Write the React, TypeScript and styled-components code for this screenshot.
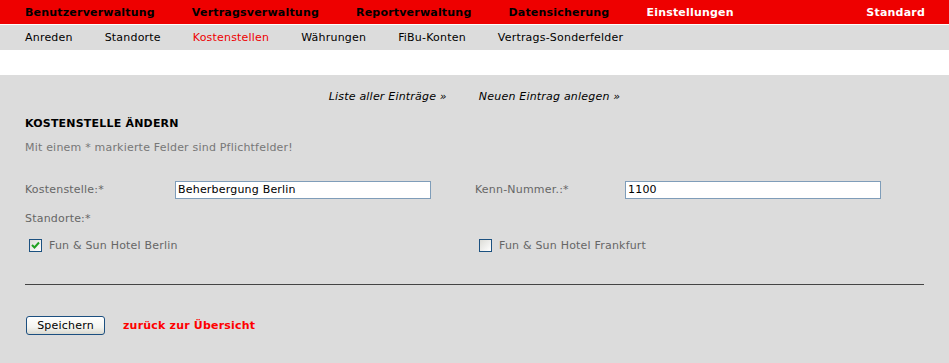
import styled, { createGlobalStyle } from "styled-components";

const GlobalStyle = createGlobalStyle`
  html, body {
    margin: 0;
    padding: 0;
    background: #dcdcdc;
    font-family: "DejaVu Sans", Verdana, sans-serif;
    font-size: 11px;
    letter-spacing: 0.2px;
  }
`;

const TopNav = styled.div`
  display: flex;
  align-items: center;
  height: 24px;
  padding: 0 24px 0 25px;
  background-color: #ee0000;
  border-bottom: 1px solid #ffffff;
  gap: 37px;
`;

const TopItem = styled.a<{ $active?: boolean; $right?: boolean }>`
  font-weight: bold;
  color: ${(p) => (p.$active || p.$right ? "#ffffff" : "#000000")};
  text-decoration: none;
  white-space: nowrap;
  margin-left: ${(p) => (p.$right ? "auto" : "0")};
`;

const SubNav = styled.div`
  display: flex;
  align-items: center;
  height: 25px;
  padding-left: 25px;
  gap: 32px;
  background-color: #dcdcdc;
`;

const SubItem = styled.a<{ $active?: boolean }>`
  color: ${(p) => (p.$active ? "#ee0000" : "#000000")};
  text-decoration: none;
  white-space: nowrap;
`;

const Spacer = styled.div`
  height: 25px;
  background: #ffffff;
`;

const Content = styled.div`
  background: #dcdcdc;
  padding: 15px 25px 0 25px;
  min-height: 273px;
  box-sizing: border-box;
`;

const LinkRow = styled.div`
  display: flex;
  justify-content: center;
  gap: 32px;
  line-height: 14px;
`;

const ItalicLink = styled.a`
  font-style: italic;
  color: #000000;
  text-decoration: none;
`;

const Heading = styled.h2`
  margin: 13px 0 0 0;
  font-size: 11px;
  line-height: 14px;
  font-weight: bold;
  color: #000000;
`;

const Hint = styled.p`
  margin: 10px 0 0 0;
  line-height: 14px;
  color: #777777;
`;

const FieldGrid = styled.div`
  display: grid;
  grid-template-columns: 450px 1fr;
  margin-top: 25px;
`;

const Field = styled.div`
  display: flex;
  align-items: center;
`;

const Label = styled.label`
  width: 150px;
  flex-shrink: 0;
  color: #666666;
  line-height: 18px;
  padding-top: 1px;
`;

const TextInput = styled.input`
  width: 256px;
  height: 18px;
  box-sizing: border-box;
  border: 1px solid #7f9db9;
  background: #ffffff;
  padding: 0 2px;
  font-family: "DejaVu Sans", Verdana, sans-serif;
  font-size: 11px;
  letter-spacing: 0.2px;
  color: #000000;
  outline: none;
`;

const SectionLabel = styled.div`
  margin-top: 13px;
  color: #666666;
  line-height: 14px;
`;

const CheckGrid = styled.div`
  display: grid;
  grid-template-columns: 450px 1fr;
  margin-top: 13px;
`;

const CheckItem = styled.label`
  display: flex;
  align-items: center;
  gap: 7px;
  padding-left: 4px;
  color: #666666;
  line-height: 14px;
`;

const Box = styled.span`
  display: inline-flex;
  align-items: center;
  justify-content: center;
  width: 13px;
  height: 13px;
  box-sizing: border-box;
  border: 1px solid #1c5180;
  background: linear-gradient(135deg, #dcdcd7 0%, #ffffff 100%);
  margin-top: -2px;
`;

const Divider = styled.hr`
  margin: 31px 0 0 0;
  border: 0;
  border-top: 1px solid #444444;
  height: 0;
`;

const Actions = styled.div`
  display: flex;
  align-items: center;
  gap: 18px;
  margin-top: 31px;
`;

const SaveButton = styled.button`
  width: 79px;
  height: 19px;
  margin-left: 1px;
  box-sizing: border-box;
  border: 1px solid #1c4f80;
  border-radius: 3px;
  background: linear-gradient(#ffffff 0%, #f4f4f0 60%, #d8d8d0 100%);
  font-family: "DejaVu Sans", Verdana, sans-serif;
  font-size: 11px;
  letter-spacing: 0.2px;
  color: #000000;
  padding: 0;
`;

const BackLink = styled.a`
  font-weight: bold;
  color: #ff0000;
  text-decoration: none;
`;

const Check = ({ checked }: { checked?: boolean }) => (
  <Box>
    {checked && (
      <svg width="9" height="9" viewBox="0 0 9 9">
        <path d="M1 4 L3.5 6.5 L8 1.5" stroke="#21a121" strokeWidth="2" fill="none" />
      </svg>
    )}
  </Box>
);

export default function App() {
  return (
    <>
      <GlobalStyle />
      <TopNav>
        <TopItem>Benutzerverwaltung</TopItem>
        <TopItem>Vertragsverwaltung</TopItem>
        <TopItem>Reportverwaltung</TopItem>
        <TopItem>Datensicherung</TopItem>
        <TopItem $active>Einstellungen</TopItem>
        <TopItem $right>Standard</TopItem>
      </TopNav>
      <SubNav>
        <SubItem>Anreden</SubItem>
        <SubItem>Standorte</SubItem>
        <SubItem $active>Kostenstellen</SubItem>
        <SubItem>Währungen</SubItem>
        <SubItem>FiBu-Konten</SubItem>
        <SubItem>Vertrags-Sonderfelder</SubItem>
      </SubNav>
      <Spacer />
      <Content>
        <LinkRow>
          <ItalicLink>Liste aller Einträge »</ItalicLink>
          <ItalicLink>Neuen Eintrag anlegen »</ItalicLink>
        </LinkRow>
        <Heading>KOSTENSTELLE ÄNDERN</Heading>
        <Hint>Mit einem * markierte Felder sind Pflichtfelder!</Hint>
        <FieldGrid>
          <Field>
            <Label>Kostenstelle:*</Label>
            <TextInput defaultValue="Beherbergung Berlin" />
          </Field>
          <Field>
            <Label>Kenn-Nummer.:*</Label>
            <TextInput defaultValue="1100" />
          </Field>
        </FieldGrid>
        <SectionLabel>Standorte:*</SectionLabel>
        <CheckGrid>
          <CheckItem>
            <Check checked />
            Fun &amp; Sun Hotel Berlin
          </CheckItem>
          <CheckItem>
            <Check />
            Fun &amp; Sun Hotel Frankfurt
          </CheckItem>
        </CheckGrid>
        <Divider />
        <Actions>
          <SaveButton>Speichern</SaveButton>
          <BackLink>zurück zur Übersicht</BackLink>
        </Actions>
      </Content>
    </>
  );
}
